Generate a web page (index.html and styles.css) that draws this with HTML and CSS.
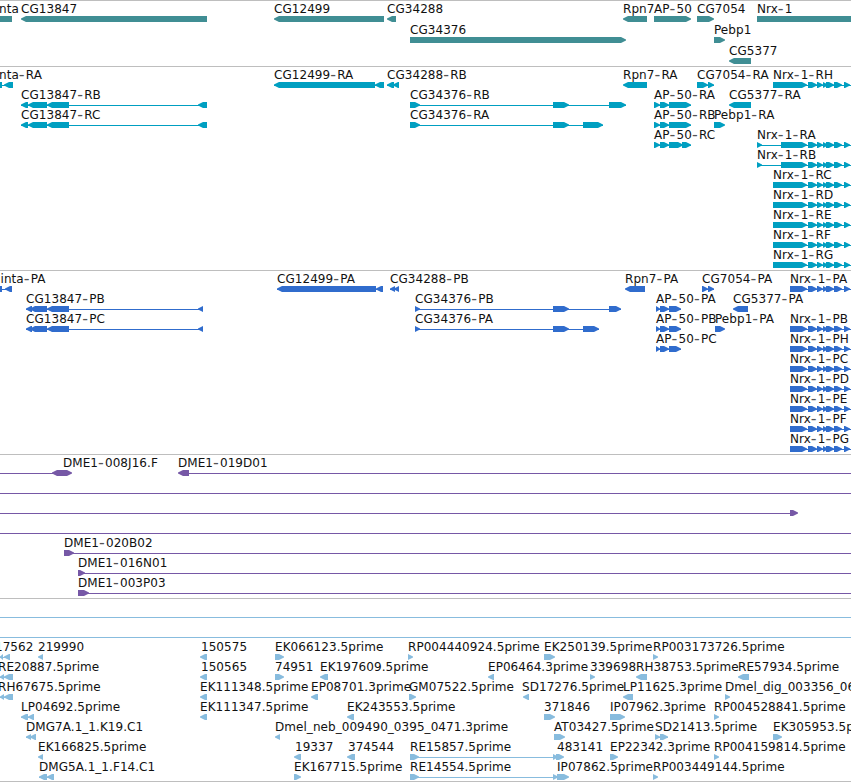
FILE: index.html
```
<!DOCTYPE html>
<html lang="en">
<head>
    <meta charset="UTF-8">
    <title>Genome Browser</title>
    <link rel="stylesheet" href="styles.css">
</head>
<body>
    <div class="browser">
        <svg class="track genes" id="genes"></svg>
        <svg class="track transcripts" id="transcripts"></svg>
        <svg class="track proteins" id="proteins"></svg>
        <svg class="track bacs" id="bacs"></svg>
        <svg class="track ests" id="ests"></svg>
    </div>
    <script src="tracks.js"></script>
</body>
</html>
```

FILE: styles.css
```
body {
    margin: 0;
    background: #fff;
    overflow: hidden;
}

.browser {
    display: flex;
    flex-direction: column;
    border-bottom: 1px solid #bebebe;
}

.track {
    display: block;
    box-sizing: border-box;
    width: 100%;
    border-top: 1px solid #bebebe;
    font-family: "DejaVu Sans", sans-serif;
    font-size: 12px;
    letter-spacing: 0.05px;
    overflow: visible;
}

.track text {
    fill: #111;
    white-space: pre;
}

.track .dash {
    font-size: 16px;
    letter-spacing: 1.2px;
    fill: #555;
}

.genes {
    height: 66px;
    fill: #408e94;
}

.transcripts {
    height: 204px;
    fill: #009fc1;
}

.proteins {
    height: 184px;
    fill: #306ccd;
}

.bacs {
    height: 144px;
    fill: #7658a6;
}

.ests {
    height: 183px;
    fill: #88bcde;
}
```

FILE: tracks.js
```
const NS = 'http://www.w3.org/2000/svg';

// feature: [row, label x, label, blocks, line]
// block: "start-end" followed by > or < for the strand, * for both ends
const exons = ' 808-817> 817-823> 823-828> 826-834> 834-842> 844-850>';
const nrx = [773, 851];

const genes = [
    [0, -1, 'nta', '0-12'],
    [0, 21, 'CG13847', '21-207<'],
    [0, 274, 'CG12499', '274-384<'],
    [0, 387, 'CG34288', '387-396<'],
    [0, 623, 'Rpn7', '623-647<'],
    [0, 654, 'AP-50', '654-691>'],
    [0, 697, 'CG7054', '697-714>'],
    [0, 757, 'Nrx-1', '757-851'],
    [1, 410, 'CG34376', '410-626>'],
    [1, 714, 'Pebp1', '714-725>'],
    [2, 729, 'CG5377', '729-751<']
];

const transcripts = [
    [0, -1, 'nta-RA', '0-2 4-13<', [0, 13]],
    [0, 274, 'CG12499-RA', '274-375< 375-384<'],
    [0, 387, 'CG34288-RB', '387-394< 393-399<'],
    [0, 623, 'Rpn7-RA', '623-647<'],
    [0, 697, 'CG7054-RA', '697-708> 708-714>'],
    [0, 773, 'Nrx-1-RH', '773-807>' + exons, nrx],
    [1, 21, 'CG13847-RB', '21-28< 28-47< 47-69< 198-207<', [21, 207]],
    [1, 410, 'CG34376-RB', '410-420> 553-569> 609-626>', [410, 626]],
    [1, 654, 'AP-50-RA', '654-660> 660-669> 669-691>'],
    [1, 729, 'CG5377-RA', '729-751<'],
    [2, 21, 'CG13847-RC', '21-28< 28-47< 47-69< 198-207<', [21, 207]],
    [2, 410, 'CG34376-RA', '410-420> 553-569> 583-603>', [410, 603]],
    [2, 654, 'AP-50-RB', '654-660> 660-669> 669-691>'],
    [2, 714, 'Pebp1-RA', '714-725>'],
    [3, 654, 'AP-50-RC', '654-660> 660-669> 669-683> 682-691>', [654, 691]],
    [3, 757, 'Nrx-1-RA', '757-762> 781-807>' + exons, [757, 851]],
    [4, 757, 'Nrx-1-RB', '757-762> 781-807>' + exons, [757, 851]],
    [5, 773, 'Nrx-1-RC', '773-807>' + exons, nrx],
    [6, 773, 'Nrx-1-RD', '773-807>' + exons, nrx],
    [7, 773, 'Nrx-1-RE', '773-807>' + exons, nrx],
    [8, 773, 'Nrx-1-RF', '773-807>' + exons, nrx],
    [9, 773, 'Nrx-1-RG', '773-807>' + exons, nrx]
];

const proteins = [
    [0, 0.5, 'inta-PA', '0-2 5-12<', [0, 12]],
    [0, 277, 'CG12499-PA', '277-376< 376-383<'],
    [0, 390, 'CG34288-PB', '390-395< 394-399<'],
    [0, 625, 'Rpn7-PA', '625-645<'],
    [0, 702, 'CG7054-PA', '702-708> 708-714>'],
    [1, 26, 'CG13847-PB', '26-32< 30-47< 47-69< 198-203<', [26, 203]],
    [1, 415, 'CG34376-PB', '415-420> 553-569> 609-621>', [415, 621]],
    [1, 656, 'AP-50-PA', '656-660> 660-669> 669-681>'],
    [1, 733, 'CG5377-PA', '733-748<'],
    [2, 26, 'CG13847-PC', '26-32< 30-47< 47-69< 198-203<', [26, 203]],
    [2, 415, 'CG34376-PA', '415-420> 553-569> 583-599>', [415, 599]],
    [2, 656, 'AP-50-PB', '656-660> 660-669> 669-681>'],
    [2, 715, 'Pebp1-PA', '715-725>'],
    [3, 656, 'AP-50-PC', '656-660> 660-669> 669-681>']
];
[[0, 'A'], [2, 'B'], [3, 'H'], [4, 'C'], [5, 'D'], [6, 'E'], [7, 'F'], [8, 'G']].forEach(([row, id]) => {
    proteins.push([row, 790, 'Nrx-1-P' + id, '790-807>' + exons, [790, 851]]);
});

const bacs = [
    [0, 63, 'DME1-008J16.F', '52-72*', [0, 60]],
    [0, 178, 'DME1-019D01', '178-189<', [180, 851]],
    [1, 0, '', '', [0, 851]],
    [2, 0, '', '790-798>', [0, 790]],
    [3, 0, '', '', [0, 851]],
    [4, 64, 'DME1-020B02', '64-74>', [64, 851]],
    [5, 78, 'DME1-016N01', '78-85>', [78, 851]],
    [6, 78, 'DME1-003P03', '78-89>', [78, 851]]
];

const ests = [
    [0, 0, '', '', [0, 851]],
    [1, 0, '', '', [0, 851]],
    [2, -5, '17562', '0-3< 4-10<', [0, 10]],
    [2, 38, '219990', '38-43<'],
    [2, 201, '150575', '200-207<'],
    [2, 275, 'EK066123.5prime', '275-284>'],
    [2, 408, 'RP004440924.5prime', '408-413>'],
    [2, 544, 'EK250139.5prime', '544-555>'],
    [2, 653, 'RP003173726.5prime', '653-658>'],
    [3, -2, 'RE20887.5prime', '0-4< 4-13<', [0, 13]],
    [3, 201, '150565', '200-207<'],
    [3, 275, '74951', '275-284>'],
    [3, 320, 'EK197609.5prime', '320-328<'],
    [3, 488, 'EP06464.3prime', '488-494<'],
    [3, 590, '339698', '590-595>'],
    [3, 636, 'RH38753.5prime', '636-647<'],
    [3, 738, 'RE57934.5prime', '738-749<'],
    [4, -2, 'RH67675.5prime', '0-4< 4-13<', [0, 13]],
    [4, 200, 'EK111348.5prime', '200-207<'],
    [4, 311, 'EP08701.3prime', '311-318<'],
    [4, 409, 'GM07522.5prime', '409-416>'],
    [4, 522, 'SD17276.5prime', '523-529<'],
    [4, 623, 'LP11625.3prime', '623-633<'],
    [4, 725, 'Dmel_dig_003356_06', '725-730>'],
    [5, 21, 'LP04692.5prime', '21-28< 28-34<'],
    [5, 200, 'EK111347.5prime', '200-207<'],
    [5, 347, 'EK243553.5prime', '347-354<'],
    [5, 544, '371846', '544-555>'],
    [5, 610, 'IP07962.3prime', '610-625>'],
    [5, 714, 'RP004528841.5prime', '714-719>'],
    [6, 26, 'DMG7A.1_1.K19.C1', '26-31< 30-36<'],
    [6, 275, 'Dmel_neb_009490_0395_0471.3prime', '275-280<'],
    [6, 554, 'AT03427.5prime', '554-565>'],
    [6, 655, 'SD21413.5prime', '655-660> 660-668>'],
    [6, 773, 'EK305953.5prime', '773-782>'],
    [7, 38, 'EK166825.5prime', '38-43<'],
    [7, 295, '19337', '294-301<'],
    [7, 348, '374544', '347-355<'],
    [7, 410, 'RE15857.5prime', '410-419> 553-558>', [410, 557]],
    [7, 557, '483141', '556-564>'],
    [7, 610, 'EP22342.3prime', '610-618>'],
    [7, 714, 'RP004159814.5prime', '714-719>'],
    [8, 39, 'DMG5A.1_1.F14.C1', '39-47< 47-54<'],
    [8, 294, 'EK167715.5prime', '294-301>'],
    [8, 410, 'RE14554.5prime', '410-419> 553-558>', [410, 557]],
    [8, 557, 'IP07862.5prime', '557-569>'],
    [8, 653, 'RP003449144.5prime', '653-658>']
];

function add(parent, name, attrs, text) {
    const el = document.createElementNS(NS, name);
    for (const key in attrs) el.setAttribute(key, attrs[key]);
    if (text) el.textContent = text;
    parent.appendChild(el);
    return el;
}

// 6px high bar, the strand end narrows to a 1px tip
function blockPath(x1, x2, dir, y) {
    const head = Math.min(5, x2 - x1);
    const left = dir === '<' || dir === '*';
    const right = dir === '>' || dir === '*';
    let d = left ? `M${x1 + head} ${y + 6}L${x1} ${y + 3.5}V${y + 2.5}L${x1 + head} ${y}` : `M${x1} ${y + 6}V${y}`;
    d += right ? `H${x2 - head}L${x2} ${y + 2.5}V${y + 3.5}L${x2 - head} ${y + 6}Z` : `H${x2}V${y + 6}Z`;
    return d;
}

function draw(id, features, step) {
    const svg = document.getElementById(id);
    features.forEach(([row, x, label, blocks, line]) => {
        const y = 15 + row * step;
        const parts = blocks ? blocks.split(' ') : [];
        if (!line && parts.length > 1) {
            line = [parseInt(parts[0]), parseInt(parts[parts.length - 1].split('-')[1])];
        }
        if (line) add(svg, 'rect', { x: line[0], y: y + 3, width: line[1] - line[0], height: 1 });
        parts.forEach(part => {
            const [, a, b, dir] = part.match(/(\d+)-(\d+)(.?)/);
            add(svg, 'path', { d: blockPath(+a, +b, dir, y) });
        });
        if (!label) return;
        const text = add(svg, 'text', { x: x, y: y - 3 });
        label.split(/(-)/).forEach((piece, i) => {
            if (piece === '-') add(text, 'tspan', { class: 'dash', dy: 1 }, piece);
            else if (piece) add(text, 'tspan', i ? { dy: -1 } : {}, piece);
        });
    });
}

draw('genes', genes, 21);
draw('transcripts', transcripts, 20);
draw('proteins', proteins, 20);
draw('bacs', bacs, 20);
draw('ests', ests, 20);
```
